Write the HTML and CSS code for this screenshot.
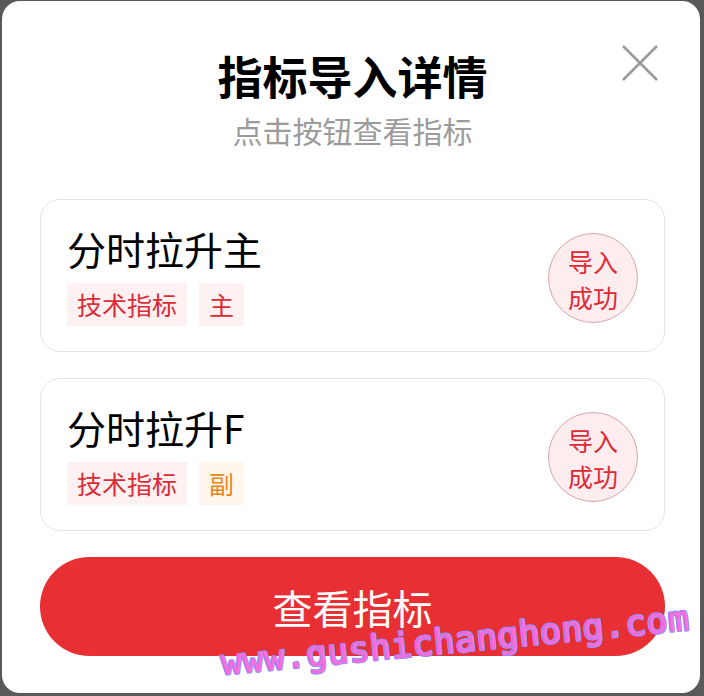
FILE: index.html
```html
<!DOCTYPE html>
<html lang="zh-CN">
<head>
    <meta charset="UTF-8">
    <meta name="viewport" content="width=device-width, initial-scale=1.0">
    <title>指标导入详情</title>
    <link rel="stylesheet" href="styles.css">
</head>
<body>
    <div class="modal">
        <button class="close" aria-label="关闭">
            <svg width="36" height="36" viewBox="0 0 36 36">
                <path d="M1 1 L35 35 M35 1 L1 35" stroke="#9a9a9a" stroke-width="2.6" fill="none"/>
            </svg>
        </button>

        <h1 class="title">指标导入详情</h1>
        <p class="subtitle">点击按钮查看指标</p>

        <div class="list">
            <div class="card">
                <div class="info">
                    <div class="name">分时拉升主</div>
                    <div class="tags">
                        <span class="tag">技术指标</span>
                        <span class="tag">主</span>
                    </div>
                </div>
                <div class="badge">导入<br>成功</div>
            </div>

            <div class="card">
                <div class="info">
                    <div class="name">分时拉升F</div>
                    <div class="tags">
                        <span class="tag">技术指标</span>
                        <span class="tag tag-sub">副</span>
                    </div>
                </div>
                <div class="badge">导入<br>成功</div>
            </div>
        </div>

        <button class="view-btn">查看指标</button>

        <div class="watermark">www.gushichanghong.com</div>
    </div>
</body>
</html>
```

FILE: styles.css
```css
/* General Styles */
body {
    background-color: #595959;
    margin: 0;
    font-family: "Noto Sans CJK SC", "Noto Sans", sans-serif;
    overflow: hidden;
}

.modal {
    position: relative;
    box-sizing: border-box;
    width: 698px;
    height: 692px;
    margin: 1px 4px 3px 2px;
    padding: 47px 35px 0 38px;
    background: #FFFFFF;
    border-radius: 18px;
    display: flex;
    flex-direction: column;
    overflow: hidden;
}

.close {
    position: absolute;
    top: 44px;
    right: 42px;
    width: 36px;
    height: 36px;
    padding: 0;
    border: none;
    background: none;
}

.close svg {
    display: block;
}

.title {
    margin: 0;
    font-size: 45px;
    line-height: 56px;
    font-weight: 700;
    color: #000000;
    text-align: center;
}

.subtitle {
    margin: 6px 0 0;
    font-size: 30px;
    line-height: 40px;
    color: #9b9b9b;
    text-align: center;
}

.list {
    margin-top: 49px;
    display: flex;
    flex-direction: column;
    gap: 26px;
}

.card {
    display: flex;
    align-items: center;
    justify-content: space-between;
    padding: 22px 26px 25px 26px;
    border: 1px solid #e3e3e3;
    border-radius: 20px;
}

.name {
    font-size: 39px;
    line-height: 52px;
    color: #000000;
}

.tags {
    margin-top: 9px;
    display: flex;
    gap: 12px;
}

.tag {
    padding: 0 10px;
    font-size: 25px;
    line-height: 43px;
    color: #dc2b37;
    background: #fdf1f1;
}

.tag-sub {
    color: #e6871c;
    background: #fff7ee;
}

.badge {
    box-sizing: border-box;
    width: 90px;
    height: 90px;
    margin-top: 8px;
    padding-top: 9px;
    border: 1px solid #d9a4ac;
    border-radius: 50%;
    background: #fdedef;
    color: #df2a36;
    font-size: 25px;
    line-height: 36px;
    text-align: center;
}

.view-btn {
    margin-top: 26px;
    height: 99px;
    border: none;
    border-radius: 50px;
    background: #e82f33;
    color: #FFFFFF;
    font-family: inherit;
    font-size: 40px;
    padding: 0;
}

/* Watermark over the bottom */
.watermark {
    position: absolute;
    left: 219px;
    top: 645px;
    font-family: "DejaVu Sans Mono", monospace;
    font-size: 35px;
    line-height: 35px;
    letter-spacing: 0.3px;
    color: #ff6ad6;
    white-space: nowrap;
    transform-origin: left center;
    transform: rotate(-5.5deg);
    text-shadow: 1px 0 #9a8cff, -1px 0 #9a8cff, 0 1px #9a8cff, 0 -1px #9a8cff,
        1px 1px #9a8cff, -1px -1px #9a8cff, 1px -1px #9a8cff, -1px 1px #9a8cff;
    pointer-events: none;
}
```
